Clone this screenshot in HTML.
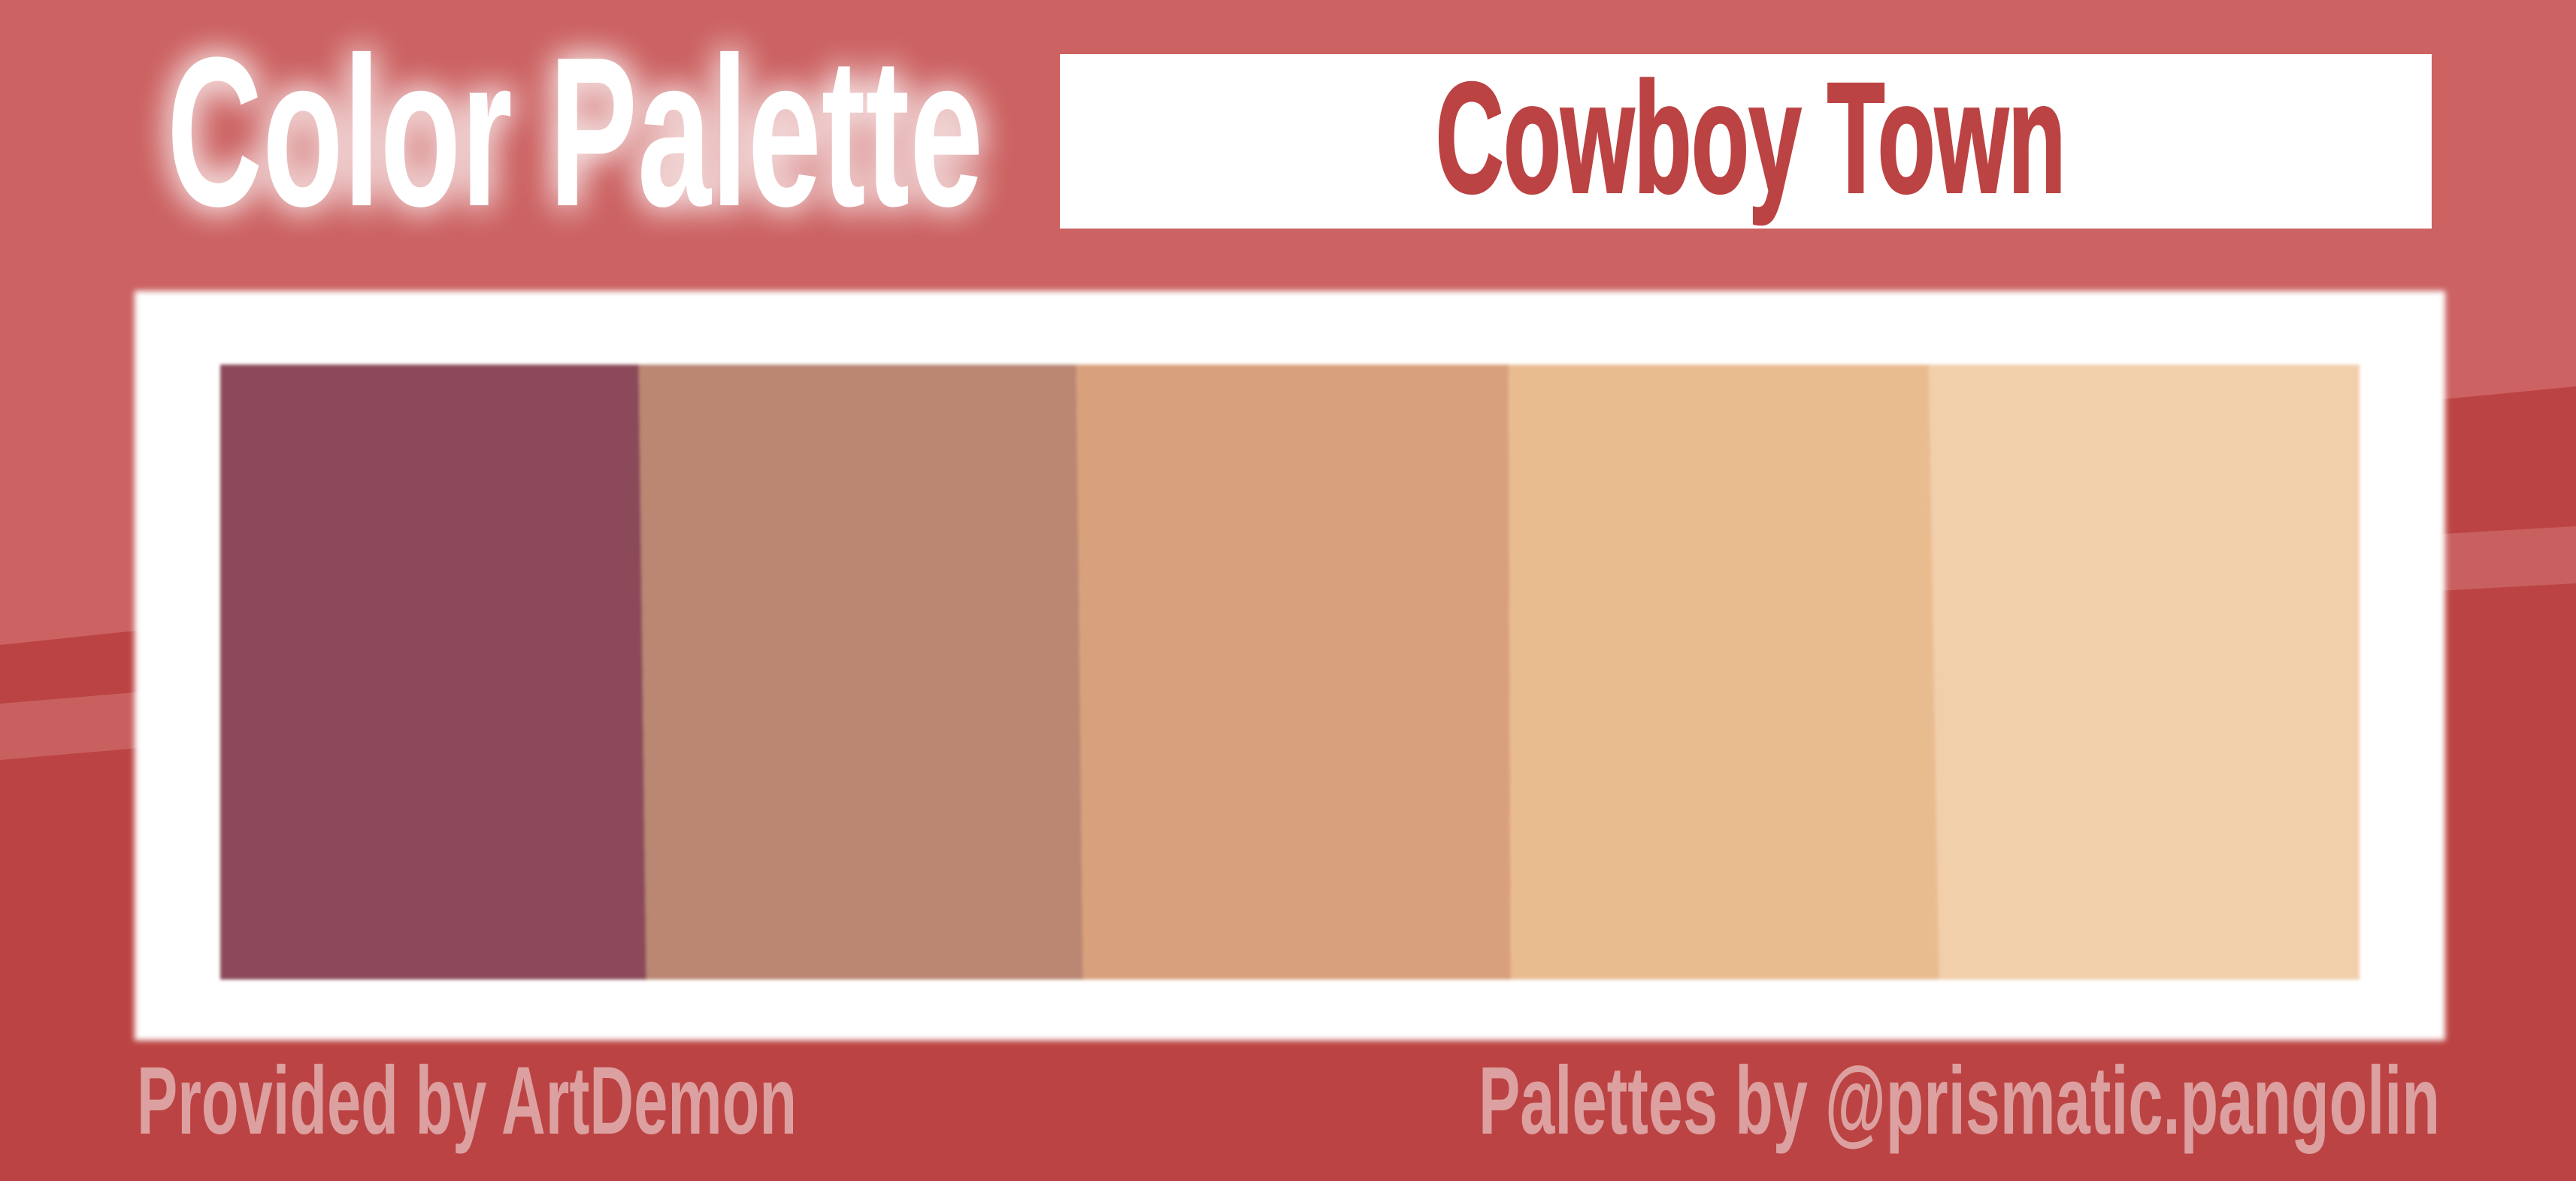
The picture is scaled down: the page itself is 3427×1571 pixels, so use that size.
<!DOCTYPE html>
<html><head><meta charset="utf-8"><style>
html,body{margin:0;padding:0;}
body{width:3427px;height:1571px;overflow:hidden;background:#cc6262;}
svg{display:block;}
</style></head><body>
<svg width="3427" height="1571" viewBox="0 0 3427 1571" xmlns="http://www.w3.org/2000/svg">
<defs>
<filter id="glow" x="-20%" y="-40%" width="140%" height="180%">
<feGaussianBlur in="SourceAlpha" stdDeviation="22" result="b"/>
<feFlood flood-color="#ffffff" flood-opacity="0.75"/>
<feComposite in2="b" operator="in" result="g"/>
<feMerge><feMergeNode in="g"/><feMergeNode in="g"/><feMergeNode in="SourceGraphic"/></feMerge>
</filter>
<filter id="soft" x="-5%" y="-5%" width="110%" height="110%"><feGaussianBlur stdDeviation="4"/></filter>
<filter id="soft2" x="-5%" y="-5%" width="110%" height="110%"><feGaussianBlur stdDeviation="2"/></filter>
</defs>
<rect width="3427" height="1571" fill="#cc6262"/>
<path d="M0 858 Q1500 700 3427 514 L3427 1571 L0 1571 Z" fill="#bc4343"/>
<path d="M0 936 Q1500 810 3427 700 L3427 776 Q1500 880 0 1011 Z" fill="#c96060"/>
<text x="222" y="273" font-family="Liberation Sans Narrow, Liberation Sans, sans-serif" font-weight="bold" font-size="283" fill="#ffffff" textLength="1086" lengthAdjust="spacingAndGlyphs" filter="url(#glow)">Color Palette</text>
<rect x="1410" y="72" width="1825" height="232" fill="#ffffff"/>
<text x="1910" y="255" font-family="Liberation Sans Narrow, Liberation Sans, sans-serif" font-weight="bold" font-size="208" fill="#bc4343" stroke="#bc4343" stroke-width="4" textLength="838" lengthAdjust="spacingAndGlyphs">Cowboy Town</text>
<rect x="179" y="387" width="3074" height="997" fill="#ffffff" filter="url(#soft)"/>
<g filter="url(#soft2)">
<polygon points="293,485 850,485 860,1303 293,1303" fill="#8b4a5a"/>
<polygon points="850,485 1432,485 1441,1303 860,1303" fill="#b98772"/>
<polygon points="1432,485 2007,485 2010,1303 1441,1303" fill="#d9a07b"/>
<polygon points="2007,485 2566,485 2580,1303 2010,1303" fill="#e9bc90"/>
<polygon points="2566,485 3139,485 3139,1303 2580,1303" fill="#f2cfab"/>
</g>
<text x="182" y="1508" font-family="Liberation Sans Narrow, Liberation Sans, sans-serif" font-weight="bold" font-size="128" fill="#dca0a0" textLength="878" lengthAdjust="spacingAndGlyphs">Provided by ArtDemon</text>
<text x="1967" y="1508" font-family="Liberation Sans Narrow, Liberation Sans, sans-serif" font-weight="bold" font-size="128" fill="#dca0a0" textLength="1279" lengthAdjust="spacingAndGlyphs">Palettes by @prismatic.pangolin</text>
</svg>
</body></html>
